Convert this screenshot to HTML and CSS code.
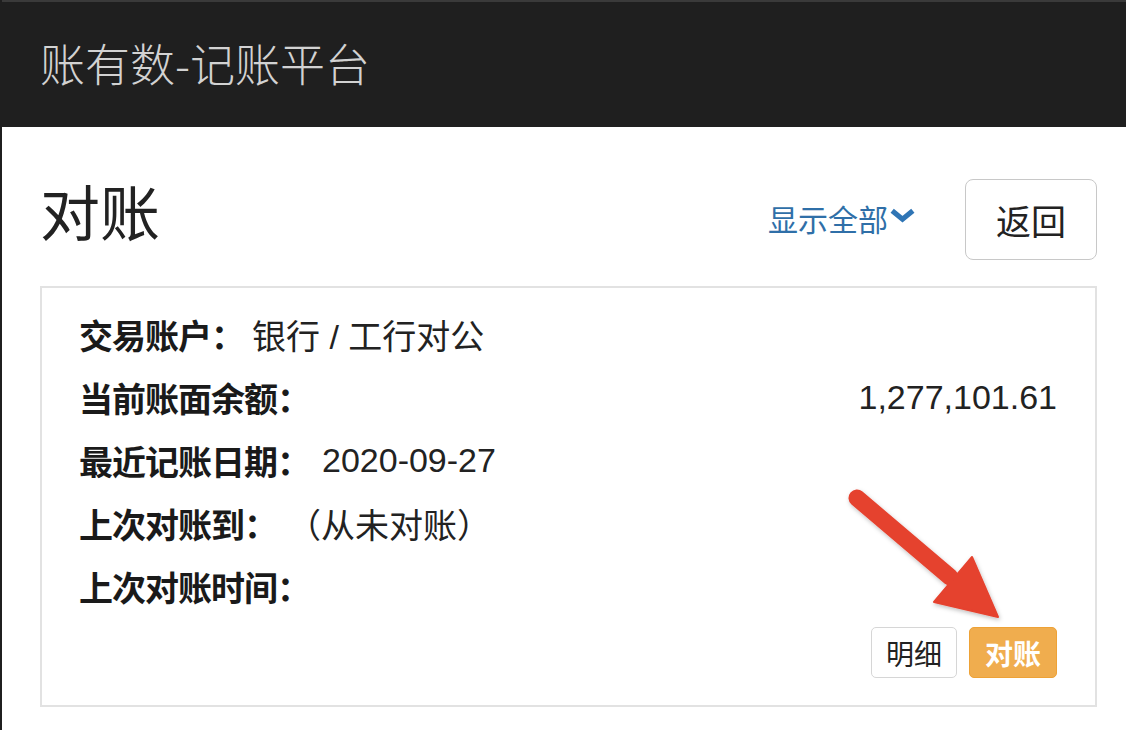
FILE: index.html
```html
<!DOCTYPE html>
<html lang="zh-CN">
<head>
    <meta charset="UTF-8">
    <meta name="viewport" content="width=device-width, initial-scale=1.0">
    <title>账有数-记账平台</title>
    <link rel="stylesheet" href="styles.css">
</head>
<body>
    <header class="navbar">
        <span class="brand">账有数-记账平台</span>
    </header>
    <main>
        <div class="page-head">
            <h1>对账</h1>
            <a class="show-all" href="#">显示全部<svg class="chevron" viewBox="0 0 28 16" width="27" height="15"><path d="M3 3 L14 12 L25 3" fill="none" stroke="#2f75b5" stroke-width="5.5" stroke-linejoin="miter"/></svg></a>
            <button class="btn btn-back">返回</button>
        </div>
        <div class="panel">
            <div class="row">
                <span class="label">交易账户：</span><span class="value">银行 / 工行对公</span>
            </div>
            <div class="row">
                <span class="label">当前账面余额：</span><span class="value num right">1,277,101.61</span>
            </div>
            <div class="row">
                <span class="label">最近记账日期：</span><span class="value num">2020-09-27</span>
            </div>
            <div class="row">
                <span class="label">上次对账到：</span><span class="value paren">（从未对账）</span>
            </div>
            <div class="row">
                <span class="label">上次对账时间：</span>
            </div>
            <div class="actions">
                <button class="btn btn-small">明细</button>
                <button class="btn btn-small btn-warning">对账</button>
            </div>
        </div>
    </main>

    <!-- 标注箭头 -->
    <svg class="arrow" width="200" height="160" viewBox="840 480 200 160">
        <defs>
            <filter id="shadow" x="-20%" y="-20%" width="140%" height="140%">
                <feDropShadow dx="1" dy="2" stdDeviation="2" flood-color="#000" flood-opacity="0.25"/>
            </filter>
        </defs>
        <g filter="url(#shadow)" fill="#e5422f" stroke="#e5422f">
            <line x1="857" y1="498" x2="950" y2="577" stroke-width="17" stroke-linecap="round"/>
            <polygon points="934,602 972,557 998,617" stroke-width="2" stroke-linejoin="round"/>
        </g>
    </svg>
</body>
</html>
```

FILE: styles.css
```css
body {
    margin: 0;
    padding: 0;
    font-family: "Liberation Sans", "Noto Sans CJK SC", sans-serif;
    color: #333;
    background-color: #fff;
    border-left: 2px solid #1f1f1f;
    min-height: 730px;
    box-sizing: border-box;
    position: relative;
}
.navbar {
    background-color: #1f1f1f;
    height: 127px;
    display: flex;
    align-items: center;
    padding-left: 38px;
    border-top: 2px solid #3a3a3a;
    box-sizing: border-box;
}
.brand {
    font-family: "Noto Sans CJK SC", sans-serif;
    font-size: 45px;
    font-weight: 300;
    color: #d2d2d2;
    margin-top: -4px;
}
main {
    padding: 0 29px 0 38px;
}
.page-head {
    display: flex;
    align-items: center;
    margin-top: 52px;
    height: 81px;
}
.page-head h1 {
    font-family: "Noto Sans CJK SC", sans-serif;
    font-size: 60px;
    font-weight: 400;
    margin: -20px 0 0 0;
    flex: 1;
    color: #222;
}
.show-all {
    font-family: "Noto Sans CJK SC", sans-serif;
    font-size: 30px;
    color: #2f6fa8;
    text-decoration: none;
    display: flex;
    align-items: center;
    margin-right: 49px;
    margin-top: -4px;
}
.chevron {
    margin-left: 1px;
    margin-top: -4px;
}
.btn {
    font-family: "Noto Sans CJK SC", sans-serif;
    background-color: #fff;
    border: 1px solid #c8c8c8;
    border-radius: 8px;
    color: #222;
    cursor: pointer;
}
.btn-back {
    width: 132px;
    height: 81px;
    font-size: 35px;
    padding: 0;
}
.panel {
    margin-top: 26px;
    border: 2px solid #e2e2e2;
    padding: 15px 38px 27px 37px;
    height: 421px;
    box-sizing: border-box;
}
.row {
    display: flex;
    align-items: center;
    height: 63px;
    font-size: 34px;
}
.label {
    font-family: "Noto Sans CJK SC", sans-serif;
    font-weight: 700;
    color: #1a1a1a;
    letter-spacing: -1px;
}
.value {
    font-family: "Liberation Sans", "Noto Sans CJK SC", sans-serif;
    color: #222;
    margin-left: 8px;
}
.value.num {
    margin-left: 12px;
}
.value.paren {
    font-family: "Noto Sans CJK SC", sans-serif;
    margin-left: 10px;
}
.value.right {
    margin-left: auto;
    margin-right: 0;
}
.actions {
    display: flex;
    justify-content: flex-end;
    gap: 12px;
    margin-top: 9px;
}
.btn-small {
    height: 51px;
    font-size: 28px;
    padding: 0 14px;
    border-radius: 5px;
    border-color: #d6d6d6;
}
.btn-warning {
    background-color: #f0ad4e;
    border-color: #eea236;
    color: #fff;
    font-weight: 700;
    padding: 0 15px;
}
.arrow {
    position: absolute;
    left: 838px;
    top: 480px;
    pointer-events: none;
}
```
